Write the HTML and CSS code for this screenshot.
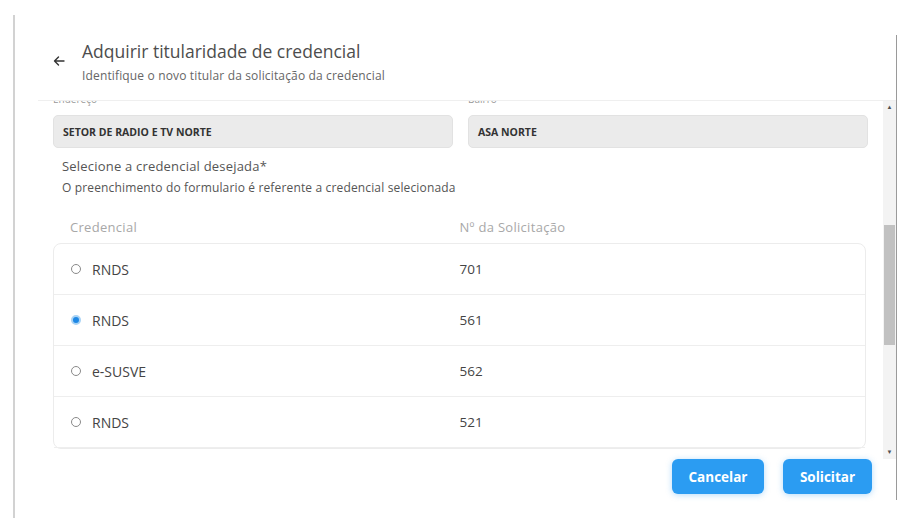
FILE: index.html
```html
<!DOCTYPE html>
<html lang="pt">
<head>
<meta charset="utf-8">
<title>Adquirir titularidade de credencial</title>
<link rel="stylesheet" href="styles.css">
</head>
<body>
<div class="dialog">
  <div class="panel">
    <header class="header">
      <svg class="back" width="12" height="10" viewBox="0 0 12 10" aria-hidden="true">
        <path d="M11 5H1.5M5.5 1L1.5 5l4 4" fill="none" stroke="#333" stroke-width="1.4" stroke-linecap="round" stroke-linejoin="round"/>
      </svg>
      <div class="titles">
        <h1 class="title">Adquirir titularidade de credencial</h1>
        <p class="subtitle">Identifique o novo titular da solicitação da credencial</p>
      </div>
    </header>
    <div class="scroll-area">
      <div class="scroll-content">
        <div class="inner">
          <div class="fields">
            <div class="field">
              <div class="field-label">Endereço</div>
              <div class="input">SETOR DE RADIO E TV NORTE</div>
            </div>
            <div class="field">
              <div class="field-label">Bairro</div>
              <div class="input">ASA NORTE</div>
            </div>
          </div>
          <p class="prompt">Selecione a credencial desejada*</p>
          <p class="note">O preenchimento do formulario é referente a credencial selecionada</p>
          <div class="thead">
            <span class="col-a">Credencial</span>
            <span class="col-b">Nº da Solicitação</span>
          </div>
          <div class="card">
            <div class="row"><span class="col-a"><span class="radio"></span>RNDS</span><span class="col-b">701</span></div>
            <div class="row"><span class="col-a"><span class="radio checked"></span>RNDS</span><span class="col-b">561</span></div>
            <div class="row"><span class="col-a"><span class="radio"></span>e-SUSVE</span><span class="col-b">562</span></div>
            <div class="row"><span class="col-a"><span class="radio"></span>RNDS</span><span class="col-b">521</span></div>
          </div>
        </div>
      </div>
      <div class="scrollbar">
        <span class="sb-arrow">▲</span>
        <div class="sb-track"><div class="sb-thumb"></div></div>
        <span class="sb-arrow">▼</span>
      </div>
    </div>
    <footer class="footer">
      <button class="btn">Cancelar</button>
      <button class="btn">Solicitar</button>
    </footer>
  </div>
</div>
</body>
</html>
```

FILE: styles.css
```css
* { box-sizing: border-box; }
html, body { margin: 0; padding: 0; background: #fff; }
body {
  display: flow-root;
  font-family: "Open Sans", "Lato", sans-serif;
  color: #444;
  width: 903px;
  height: 518px;
  overflow: hidden;
}
.dialog {
  margin: 15px 0 0 13px;
  padding-top: 20px;
  height: 503px;
  border-left: 2px solid #d2d2d2;
}
.panel {
  margin-left: 23px;
  width: 859px;
  height: 465px;
  border-right: 1px solid #9a9a9a;
  display: flex;
  flex-direction: column;
}
.header {
  display: flex;
  align-items: flex-start;
  padding: 5px 0 16px 15px;
  border-bottom: 1px solid #efefef;
}
.back { margin: 16px 17px 0 0; flex: none; }
.title {
  margin: 0;
  font-size: 17.5px;
  line-height: 22px;
  font-weight: 400;
  color: #4d4d4d;
}
.subtitle {
  margin: 6px 0 0;
  font-size: 12px;
  letter-spacing: 0.15px;
  line-height: 16px;
  color: #666;
}
.scroll-area {
  display: flex;
  height: 358px;
  flex: none;
}
.scroll-content {
  flex: 1;
  overflow: hidden;
  padding: 0 15px;
}
.inner { margin-top: -9px; }
.fields { display: flex; gap: 15px; }
.field { flex: 1; }
.field-label {
  font-size: 10px;
  line-height: 14px;
  color: #999;
  margin-bottom: 9px;
}
.input {
  height: 33px;
  background: #ebebeb;
  border: 1px solid #e2e2e2;
  border-radius: 5px;
  padding: 0 9px;
  display: flex;
  align-items: center;
  font-size: 10.5px;
  font-weight: 700;
  color: #333;
}
.prompt {
  margin: 9px 0 0 9px;
  font-size: 13px;
  letter-spacing: 0.2px;
  line-height: 18px;
  color: #555;
}
.note {
  margin: 4px 0 0 9px;
  font-size: 12px;
  letter-spacing: 0.15px;
  line-height: 18px;
  color: #555;
}
.thead {
  display: grid;
  grid-template-columns: 1fr 1fr;
  margin: 21px 2px 7px 0;
  font-size: 13px;
  letter-spacing: 0.3px;
  line-height: 18px;
  color: #a8a8a8;
}
.col-a { padding-left: 17px; display: flex; align-items: center; }
.card {
  border: 1px solid #ececec;
  border-radius: 8px;
  margin-right: 2px;
}
.row {
  display: grid;
  grid-template-columns: 1fr 1fr;
  align-items: center;
  height: 51px;
  border-bottom: 1px solid #eeeeee;
  font-size: 13.5px;
  color: #444;
}
.row .col-a { padding-left: 17px; font-size: 14px; }
.radio {
  width: 10px;
  height: 10px;
  border: 1px solid #8a8a8a;
  border-radius: 50%;
  margin-right: 11px;
  flex: none;
}
.radio.checked {
  border: 2px solid #a9d3f5;
  background: #1e88e5;
}
.scrollbar {
  width: 13px;
  flex: none;
  display: flex;
  flex-direction: column;
  background: #f3f3f3;
}
.sb-arrow {
  height: 13px;
  font-size: 6px;
  line-height: 13px;
  text-align: center;
  color: #505050;
}
.sb-track { flex: 1; display: flex; flex-direction: column; padding-top: 111px; }
.sb-thumb {
  height: 120px;
  background: #c1c1c1;
  margin: 0 1px;
}
.footer {
  display: flex;
  justify-content: flex-end;
  gap: 19px;
  padding-right: 24px;
}
.btn {
  height: 35px;
  padding: 0;
  border: none;
  border-radius: 6px;
  background: #2b9cf2;
  color: #fff;
  font-family: "Open Sans", sans-serif;
  font-size: 13.5px;
  font-weight: 700;
  box-shadow: 0 1px 6px rgba(43,156,242,0.35);
}
.btn:first-child { width: 92px; }
.btn:last-child { width: 89px; }
```
